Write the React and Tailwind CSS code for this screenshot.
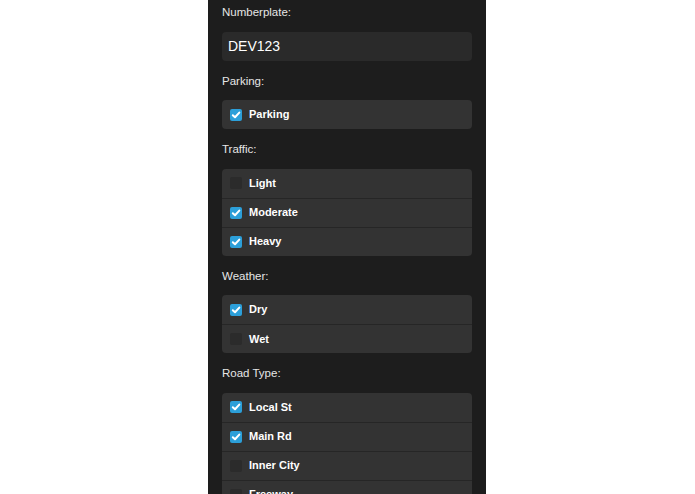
import React from "react";

function Check({ checked }) {
  return checked ? (
    <span className="w-[12px] h-[12px] rounded-[2px] bg-[#2c9fd9] flex items-center justify-center shrink-0">
      <svg width="10" height="10" viewBox="0 0 10 10">
        <path d="M1.8 5.2 L4 7.3 L8.3 2.6" stroke="#fff" strokeWidth="2" fill="none" strokeLinecap="round" strokeLinejoin="round" />
      </svg>
    </span>
  ) : (
    <span className="w-[12px] h-[12px] rounded-[2px] bg-[#2b2b2b] shrink-0" />
  );
}

function Label({ children, first }) {
  return (
    <div className={`${first ? "mt-[4px]" : "mt-[12px]"} h-[16px] leading-[16px] mb-[11.5px] text-[11.5px] text-[#e6e6e6]`}>
      {children}
    </div>
  );
}

function List({ items }) {
  return (
    <div className="rounded-[4px] bg-[#333333] overflow-hidden">
      {items.map(([name, checked], i) => (
        <div
          key={name}
          className={`h-[29px] flex items-center pl-[8px] gap-[7px] ${i > 0 ? "border-t border-[#262626]" : ""}`}
        >
          <Check checked={checked} />
          <span className="text-[11px] font-bold text-white">{name}</span>
        </div>
      ))}
    </div>
  );
}

export default function App() {
  return (
    <div className="w-[695px] h-[494px] bg-white overflow-hidden" style={{ fontFamily: '"Liberation Sans", Arial, sans-serif' }}>
      <div className="w-[278px] h-[494px] ml-[208px] bg-[#1d1d1d] px-[14px] overflow-hidden">
        <Label first>Numberplate:</Label>
        <div className="h-[29px] rounded-[4px] bg-[#2a2a2a] flex items-center px-[6px] text-[14px] text-white">
          DEV123
        </div>
        <Label>Parking:</Label>
        <List items={[["Parking", true]]} />
        <Label>Traffic:</Label>
        <List items={[["Light", false], ["Moderate", true], ["Heavy", true]]} />
        <Label>Weather:</Label>
        <List items={[["Dry", true], ["Wet", false]]} />
        <Label>Road Type:</Label>
        <List items={[["Local St", true], ["Main Rd", true], ["Inner City", false], ["Freeway", false]]} />
      </div>
    </div>
  );
}
